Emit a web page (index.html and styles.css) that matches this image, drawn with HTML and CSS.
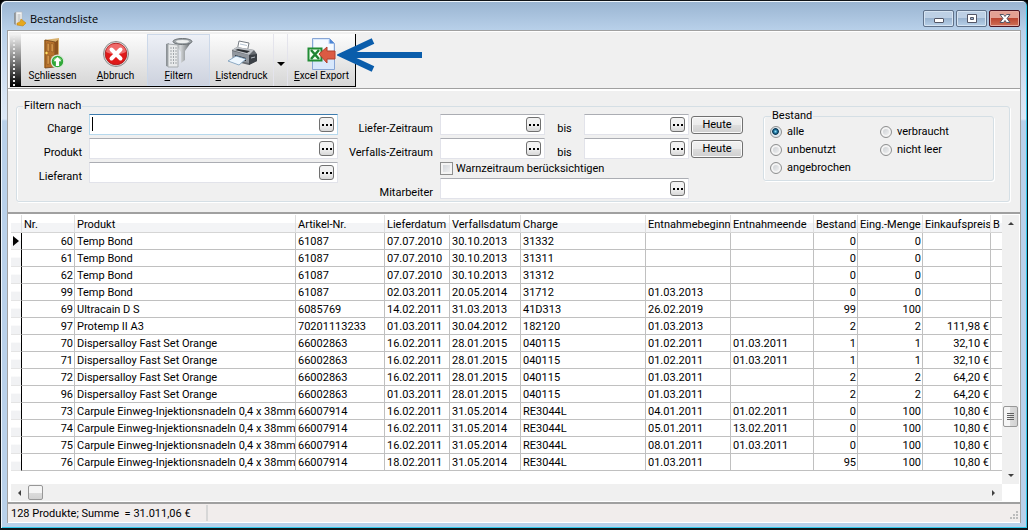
FILE: index.html
```
<!DOCTYPE html>
<html lang="de">
<head>
  <meta charset="UTF-8" />
  <meta name="viewport" content="width=device-width, initial-scale=1.0"/>
  <title>Bestandsliste</title>
  <link rel="stylesheet" href="styles.css">
</head>
<body>

  <div class="window">
    <header class="titlebar">
      <svg class="app-icon" width="13" height="16" viewBox="0 0 13 16">
        <path d="M1 2l2-1v13l-2-1z" fill="#8f9599"/>
        <path d="M3 1h6v13H3z" fill="#f3f4f4" stroke="#b5babd" stroke-width=".6"/>
        <path d="M4.500 4h3M4.500 6h3M4.500 8h3M4.500 10h3" stroke="#a9aeb1"/>
        <path d="M4 12l3-1 1-3 5 4-3 3-6-1z" fill="#e5a81e" stroke="#bd7b0b" stroke-width=".5"/>
      </svg>
      <h1>Bestandsliste</h1>
      <div class="window-buttons">
        <button class="win-btn" aria-label="Minimieren">
          <svg width="12" height="12" viewBox="0 0 12 12"><rect x="1.500" y="5.500" width="9" height="4" rx=".5" fill="#fff" stroke="#535666"/></svg>
        </button>
        <button class="win-btn" aria-label="Maximieren">
          <svg width="12" height="12" viewBox="0 0 12 12"><path d="M1.500 1.500h9v8h-9zM4.500 4.500v2h3v-2z" fill="#fff" fill-rule="evenodd" stroke="#535666"/></svg>
        </button>
        <button class="win-btn close" aria-label="Schließen">
          <svg width="12" height="12" viewBox="0 0 12 12"><path d="M1 1.500h3.500L6 3.500l1.500-2H11L8 5.500l3 4H7.500L6 7.500l-1.500 2H1l3-4z" fill="#fff" stroke="#535666"/></svg>
        </button>
      </div>
    </header>

    <div class="content">
      <div class="toolbar-area">
        <div class="toolbar">
          <div class="grip"></div>
          <button class="tool">
            <svg width="32" height="32" viewBox="0 0 32 32">
              <path d="M7 2l15-2v27L7 30z" fill="#d8b06e"/>
              <path d="M8 2l10 2v25L8 30z" fill="#b8722c" stroke="#6f431b" stroke-width=".8"/>
              <path d="M18 4l3-2v23l-3 4z" fill="#8c531e"/>
              <path d="M10 5l2.500.5v8L10 13zM14 5.500l2.500.5v8L14 13.500zM10 17l2.500.5V26l-2.500.5zM14 17.500l2.500.5v7l-2.500.5z" fill="#d29449" stroke="#83511f" stroke-width=".5"/>
              <circle cx="9.500" cy="15" r="1.200" fill="#ffe168"/>
              <circle cx="20.500" cy="23.500" r="6.300" fill="#30a838" stroke="#dce7dc" stroke-width="1.200"/>
              <path d="M16 22a5 5 0 019 0z" fill="#83d47f"/>
              <path d="M20.500 19l4 4.300h-2.400V28h-3.200v-4.700h-2.400z" fill="#fff"/>
            </svg>
            <span>S<u>c</u>hliessen</span>
          </button>
          <button class="tool">
            <svg width="32" height="32" viewBox="0 0 32 32">
              <circle cx="16" cy="16" r="12.500" fill="#ddd" stroke="#8c8c8c"/>
              <circle cx="16" cy="16" r="10.800" fill="#e01919" stroke="#a51717" stroke-width=".8"/>
              <path d="M6 14C7 3 25 3 26 14c-6 3-14 3-20 0z" fill="#ef6a6a"/>
              <path d="M11.500 11.500l9 9m0-9l-9 9" stroke="#fff" stroke-width="4" stroke-linecap="round"/>
            </svg>
            <span><u>A</u>bbruch</span>
          </button>
          <button class="tool active">
            <svg width="32" height="32" viewBox="0 0 32 32">
              <defs><linearGradient id="steel"><stop offset="0" stop-color="#9aa0a4"/><stop offset=".4" stop-color="#d4d7d9"/><stop offset="1" stop-color="#4f5559"/></linearGradient></defs>
              <path d="M10 3l8 11v11l4-3V13l7-10z" fill="url(#steel)"/>
              <ellipse cx="19.500" cy="3.500" rx="9.500" ry="3" fill="#a2a8ac" stroke="#6b7175"/>
              <ellipse cx="19.500" cy="3.500" rx="6.500" ry="1.600" fill="#edefef"/>
              <path d="M3 6l3-1v24l-3-1z" fill="#8c9296"/>
              <path d="M5 6l10 1v22L5 29z" fill="#e8eaeb" stroke="#a6abae"/>
              <path d="M8 9v17M10.500 9v18M13 9v17" stroke="#a1a6aa" stroke-dasharray="2 1"/>
            </svg>
            <span><u>F</u>iltern</span>
          </button>
          <button class="tool">
            <svg width="32" height="32" viewBox="0 0 32 32">
              <path d="M13 3l10 2-2 10-10-2z" fill="#fff" stroke="#777d84"/>
              <path d="M14 6l7 1.500" stroke="#b6c5d4"/>
              <path d="M6 12l5-3 17 3 3 4v7l-8 4-16-4z" fill="#666b71"/>
              <path d="M6 12l5-3 17 3-5 5z" fill="#bec2c7"/>
              <path d="M9 12l3-1 12 2-3 2z" fill="#2c3034"/>
              <path d="M23 17l8-1v7l-8 4z" fill="#3b4046"/>
              <path d="M6 13l17 4v8L7 22z" fill="#91979e"/>
              <path d="M9 17l11 3v3L9 20z" fill="#23272b"/>
              <path d="M10 18l10 3-7 6L2 23z" fill="#edf7ff" stroke="#7598b8" stroke-width=".8"/>
              <path d="M25 20l4-1" stroke="#b7bec5"/>
            </svg>
            <span><u>L</u>istendruck</span>
          </button>
          <button class="tool-arrow" aria-label="Weitere Optionen"></button>
          <button class="tool wide">
            <svg width="32" height="32" viewBox="0 0 32 32">
              <path d="M6.500.5h17l5 5v26h-22z" fill="#d8e8fc" stroke="#87a5d5"/>
              <path d="M8 2h14v4h5v13C20 23 13 12 8 18z" fill="#f6faff"/>
              <path d="M23.500.5v5h5z" fill="#4d86d6"/>
              <path d="M2.500 10.500h13v12h-13z" fill="#f5fff4" stroke="#218c35" stroke-width="2"/>
              <path d="M5 12l8 9m0-9l-8 9" stroke="#208434" stroke-width="2.500"/>
              <path d="M13 16l8-7v4h8v8h-8v4z" fill="#dc5b43" stroke="#b2402d"/>
            </svg>
            <span><u>E</u>xcel Export</span>
          </button>
          <svg class="pointer" width="86" height="36" viewBox="0 0 86 36">
            <path d="M36 4L6 18l30 14M8 18h77" fill="none" stroke="#0a5dab" stroke-width="6"/>
          </svg>
        </div>
      </div>

      <form class="filter-area">
        <fieldset class="filter">
          <legend>Filtern nach</legend>

          <div class="fields">
            <label for="charge">Charge</label>
            <div class="picker focused"><i class="caret"></i><input type="text" id="charge" /><button type="button" aria-label="Charge wählen"></button></div>
            <label for="produkt">Produkt</label>
            <div class="picker"><input type="text" id="produkt" /><button type="button" aria-label="Produkt wählen"></button></div>
            <label for="lieferant">Lieferant</label>
            <div class="picker"><input type="text" id="lieferant" /><button type="button" aria-label="Lieferant wählen"></button></div>
          </div>

          <div class="fields periods">
            <label for="lieferVon">Liefer-Zeitraum</label>
            <div class="picker"><input type="text" id="lieferVon" /><button type="button" aria-label="Datum wählen"></button></div>
            <label class="until" for="lieferBis">bis</label>
            <div class="picker"><input type="text" id="lieferBis" /><button type="button" aria-label="Datum wählen"></button></div>
            <button type="button" class="today">Heute</button>

            <label for="verfallVon">Verfalls-Zeitraum</label>
            <div class="picker"><input type="text" id="verfallVon" /><button type="button" aria-label="Datum wählen"></button></div>
            <label class="until" for="verfallBis">bis</label>
            <div class="picker"><input type="text" id="verfallBis" /><button type="button" aria-label="Datum wählen"></button></div>
            <button type="button" class="today">Heute</button>

            <label class="check"><input type="checkbox" />Warnzeitraum berücksichtigen</label>

            <label for="mitarbeiter">Mitarbeiter</label>
            <div class="picker span"><input type="text" id="mitarbeiter" /><button type="button" aria-label="Mitarbeiter wählen"></button></div>
          </div>

          <fieldset class="stock">
            <legend>Bestand</legend>
            <label><input type="radio" name="bestand" checked />alle</label>
            <label><input type="radio" name="bestand" />verbraucht</label>
            <label><input type="radio" name="bestand" />unbenutzt</label>
            <label><input type="radio" name="bestand" />nicht leer</label>
            <label><input type="radio" name="bestand" />angebrochen</label>
          </fieldset>
        </fieldset>
      </form>

      <div class="grid-area">
        <div class="grid-main">
          <div class="grid-view">
            <table>
              <colgroup>
                <col class="c-mark"><col class="c-nr"><col class="c-product"><col class="c-article"><col class="c-delivery"><col class="c-expiry">
                <col class="c-batch"><col class="c-start"><col class="c-end"><col class="c-stock"><col class="c-amount"><col class="c-price"><col>
              </colgroup>
              <thead>
                <tr>
                  <th></th>
                  <th>Nr.</th>
                  <th>Produkt</th>
                  <th>Artikel-Nr.</th>
                  <th>Lieferdatum</th>
                  <th>Verfallsdatum</th>
                  <th>Charge</th>
                  <th>Entnahmebeginn</th>
                  <th>Entnahmeende</th>
                  <th>Bestand</th>
                  <th>Eing.-Menge</th>
                  <th>Einkaufspreis</th>
                  <th>B</th>
                </tr>
              </thead>
              <tbody id="stockBody">
                <!-- Dynamic Rows -->
              </tbody>
            </table>
          </div>
          <div class="scroll vertical">
            <button class="arrow up" aria-label="Nach oben"></button>
            <div class="space before"></div>
            <div class="thumb"></div>
            <div class="space after"></div>
            <button class="arrow down" aria-label="Nach unten"></button>
          </div>
        </div>
        <div class="scroll horizontal">
          <button class="arrow left" aria-label="Nach links"></button>
          <div class="thumb"></div>
          <div class="space"></div>
          <button class="arrow right" aria-label="Nach rechts"></button>
        </div>
      </div>

      <footer class="statusbar">
        <div class="summary">128 Produkte; Summe&nbsp; = 31.011,06 €</div>
        <svg class="resize" width="10" height="10" viewBox="0 0 10 10">
          <path d="M7 0h2v2H7zM4 3h2v2H4zM7 3h2v2H7zM1 6h2v2H1zM4 6h2v2H4zM7 6h2v2H7z" fill="#bcbcbc"/>
        </svg>
      </footer>
    </div>
  </div>

  <script>
    const carpule = "Carpule Einweg-Injektionsnadeln 0,4 x 38mm";
    const rows = [
      ["60", "Temp Bond", "61087", "07.07.2010", "30.10.2013", "31332", "", "", "0", "0", ""],
      ["61", "Temp Bond", "61087", "07.07.2010", "30.10.2013", "31311", "", "", "0", "0", ""],
      ["62", "Temp Bond", "61087", "07.07.2010", "30.10.2013", "31312", "", "", "0", "0", ""],
      ["99", "Temp Bond", "61087", "02.03.2011", "20.05.2014", "31712", "01.03.2013", "", "0", "0", ""],
      ["69", "Ultracain D S", "6085769", "14.02.2011", "31.03.2013", "41D313", "26.02.2019", "", "99", "100", ""],
      ["97", "Protemp II A3", "70201113233", "01.03.2011", "30.04.2012", "182120", "01.03.2013", "", "2", "2", "111,98 €"],
      ["70", "Dispersalloy Fast Set Orange", "66002863", "16.02.2011", "28.01.2015", "040115", "01.02.2011", "01.03.2011", "1", "1", "32,10 €"],
      ["71", "Dispersalloy Fast Set Orange", "66002863", "16.02.2011", "28.01.2015", "040115", "01.02.2011", "01.03.2011", "1", "1", "32,10 €"],
      ["72", "Dispersalloy Fast Set Orange", "66002863", "16.02.2011", "28.01.2015", "040115", "01.03.2011", "", "2", "2", "64,20 €"],
      ["96", "Dispersalloy Fast Set Orange", "66002863", "01.03.2011", "28.01.2015", "040115", "01.03.2011", "", "2", "2", "64,20 €"],
      ["73", carpule, "66007914", "16.02.2011", "31.05.2014", "RE3044L", "04.01.2011", "01.02.2011", "0", "100", "10,80 €"],
      ["74", carpule, "66007914", "16.02.2011", "31.05.2014", "RE3044L", "05.01.2011", "13.02.2011", "0", "100", "10,80 €"],
      ["75", carpule, "66007914", "16.02.2011", "31.05.2014", "RE3044L", "08.01.2011", "01.03.2011", "0", "100", "10,80 €"],
      ["76", carpule, "66007914", "18.02.2011", "31.05.2014", "RE3044L", "01.03.2011", "", "95", "100", "10,80 €"]
    ];
    const numeric = [0, 8, 9, 10];

    rows.forEach(cells => {
      const row = document.createElement("tr");
      row.innerHTML = "<td></td>" +
        cells.map((text, i) => `<td${numeric.includes(i) ? ' class="num"' : ""}>${text}</td>`).join("") +
        "<td></td>";
      document.getElementById("stockBody").appendChild(row);
    });
  </script>

</body>
</html>
```

FILE: styles.css
```
* {
  box-sizing: border-box;
}

body {
  margin: 0;
  background: #000;
  color: #000;
  font-family: Roboto, "Liberation Sans", Arial, sans-serif;
  font-size: 11px;
  line-height: 14px;
}

button, input {
  font: inherit;
  color: inherit;
  margin: 0;
  padding: 0;
}

.window {
  display: flex;
  flex-direction: column;
  min-height: 100vh;
  padding: 0 6px 5px;
  border: 1px solid #101418;
  border-bottom-width: 2px;
  border-radius: 6px 6px 0 0;
  background: linear-gradient(#99b4d1, #b9d1ea 30px, #d5e3f3 90px, #dce8f6 118px, #b9d1ea 120px);
  box-shadow: inset 1px 1px #eef5fb, inset -1px -1px #2fc8ea;
}

/* Title bar */
.titlebar {
  display: flex;
  align-items: center;
  height: 29px;
  padding: 6px 1px 0 6px;
}

.titlebar h1 {
  flex: 1;
  margin: 0 0 0 4px;
  font-family: "Open Sans", "Segoe UI", sans-serif;
  font-size: 11px;
  font-weight: normal;
}

.window-buttons {
  display: flex;
  gap: 2px;
}

.win-btn {
  display: flex;
  align-items: center;
  justify-content: center;
  width: 31px;
  height: 17px;
  border: 1px solid #5f7189;
  border-radius: 2px;
  background: linear-gradient(#bdd0e5 45%, #9ab4d0 50%, #b8d0e8);
  box-shadow: inset 0 0 0 1px #d6e4f2;
}

.win-btn.close {
  border-color: #4c1422;
  background: linear-gradient(#e3a093 45%, #bb4632 50%, #cf7057);
  box-shadow: inset 0 0 0 1px #e5aaa0;
}

.content {
  display: flex;
  flex: 1;
  flex-direction: column;
  border-left: 1px solid #a0a0a0;
  border-right: 1px solid #a0a0a0;
  background: #f0f0f0;
}

/* Toolbar */
.toolbar-area {
  padding: 3px 2px 1px;
  border-top: 1px solid #a0a0a0;
  border-bottom: 1px solid #a0a0a0;
  box-shadow: inset 1px 1px #fff;
}

.toolbar {
  display: flex;
  position: relative;
  width: max-content;
  height: 53px;
  border-right: 1px solid #000;
  border-bottom: 1px solid #000;
  background: linear-gradient(#fcfcfc, #d6d6d6);
}

.grip {
  width: 11px;
  background:
    repeating-linear-gradient(transparent 0 2px, #e8e8e8 2px 4px) 3px 0 / 2px 100% no-repeat,
    linear-gradient(#f4f4f4, #808080 50%, #000);
}

.tool {
  display: flex;
  flex-direction: column;
  align-items: center;
  width: 63px;
  padding-top: 4px;
  border: 0;
  background: none;
  font-size: 10px;
  line-height: 12px;
  white-space: nowrap;
}

.tool.active {
  border: 1px solid #ccd8e9;
  padding-top: 3px;
  background: linear-gradient(#edf0f6, #cdd2de);
}

.tool.wide {
  width: 67px;
}

.tool-arrow {
  display: flex;
  align-items: center;
  justify-content: center;
  width: 15px;
  padding-top: 8px;
  border: 0;
  border-left: 1px solid #e4e4ec;
  border-right: 1px solid #e4e4ec;
  background: none;
}

.tool-arrow::before {
  content: "";
  border: 4px solid transparent;
  border-top-color: #000;
  border-bottom: 0;
}

.pointer {
  position: absolute;
  top: 3px;
  left: calc(100% - 18px);
}

/* Filter */
.filter-area {
  padding: 8px 10px 10px 8px;
  border-top: 2px solid #fff;
  border-bottom: 2px solid #a0a0a0;
}

fieldset {
  min-width: 0;
  margin: 0;
  border: 1px solid #d5dfe5;
  border-radius: 3px;
  box-shadow: inset 1px 0 #fff, 1px 1px #fff;
}

.filter {
  display: flex;
  padding: 1px 15px 2px 6px;
}

legend {
  padding: 0 1px;
}

.fields {
  display: grid;
  grid-template-columns: 59px 249px;
  gap: 3px 7px;
  align-content: start;
}

.fields > label {
  padding-top: 8px;
  height: 21px;
  line-height: 13px;
  text-align: right;
  white-space: nowrap;
}

.periods {
  grid-template-columns: 95px 105px 25px 105px 52px;
}

.periods .until {
  text-align: center;
}

.fields > .check {
  display: flex;
  grid-column: 2 / -1;
  align-items: center;
  gap: 3px;
  height: 13px;
  padding: 0;
}

.picker {
  display: flex;
  height: 21px;
  padding: 2px 3px 3px 2px;
  border: 1px solid #e2e3ea;
  border-top-color: #abadb3;
  background: #fff;
}

.picker.focused {
  border-color: #b7d9ed;
  border-top-color: #3d7bad;
}

.picker.span {
  grid-column: 2 / 5;
}

.picker input {
  flex: 1;
  min-width: 0;
  border: 0;
  outline: 0;
  background: none;
}

.caret {
  width: 1px;
  height: 14px;
  background: #000;
}

.picker button {
  width: 15px;
  height: 15px;
  border: 1px solid #707070;
  border-radius: 3px;
  background:
    repeating-linear-gradient(90deg, #000 0 2px, transparent 2px 4px) 2px 6px / 10px 2px no-repeat,
    linear-gradient(#f2f2f2 50%, #d8d8d8);
}

.today {
  height: 18px;
  margin: 2px 5px 0 -5px;
  border: 1px solid #707070;
  border-radius: 3px;
  background: linear-gradient(#f2f2f2, #ebebeb 50%, #dddddd 50%, #cfcfcf);
  box-shadow: inset 0 0 0 1px #fafafa;
}

input[type="checkbox"] {
  appearance: none;
  width: 13px;
  height: 13px;
  border: 1px solid #8e8f8f;
  background: linear-gradient(135deg, #cbcfd5, #f6f6f6);
  box-shadow: inset 0 0 0 2px #f4f4f4;
}

.stock {
  display: grid;
  grid-template-columns: 110px 1fr;
  align-content: start;
  width: 231px;
  height: 72px;
  margin: -5px 0 0 auto;
  padding: 0 6px;
}

.stock legend {
  margin-left: 1px;
}

.stock label {
  display: flex;
  align-items: center;
  gap: 5px;
  height: 18px;
}

input[type="radio"] {
  appearance: none;
  width: 12px;
  height: 12px;
  border: 1px solid #8e8f8f;
  border-radius: 50%;
  background: linear-gradient(135deg, #c4c8cc, #f8f8f8);
  box-shadow: inset 0 0 0 2px #f4f4f4;
}

input[type="radio"]:checked {
  background: radial-gradient(circle at 45% 45%, #8fe0fb, #14668f 25%, #0b3550 38%, #dfe8ee 48%);
  box-shadow: none;
}

/* Grid */
.grid-area {
  display: flex;
  flex: 1;
  flex-direction: column;
  padding: 1px 1px 1px 3px;
  border-bottom: 2px solid #a0a0a0;
  background: #fff;
}

.grid-main {
  display: flex;
  flex: 1;
}

.grid-view {
  flex: 1;
  min-width: 0;
  overflow: hidden;
}

table {
  width: 100%;
  border-spacing: 0;
  table-layout: fixed;
}

.c-mark { width: 11px; }
.c-nr { width: 53px; }
.c-product { width: 221px; }
.c-article { width: 89px; }
.c-delivery { width: 65px; }
.c-expiry { width: 71px; }
.c-batch { width: 125px; }
.c-start { width: 85px; }
.c-end { width: 83px; }
.c-stock { width: 44px; }
.c-amount { width: 65px; }
.c-price { width: 68px; }

th, td {
  height: 17px;
  padding: 2px 1px 0 2px;
  overflow: hidden;
  border-right: 1px solid #c0c0c0;
  border-bottom: 1px solid #c0c0c0;
  line-height: 14px;
  text-align: left;
  white-space: nowrap;
}

th {
  height: 18px;
  padding-right: 0;
  border-color: #dfdfdf;
  border-bottom-color: #d5d5d5;
  background: linear-gradient(#fff 45%, #f3f4f6 50%);
  font-weight: normal;
}

td.num {
  text-align: right;
}

td:first-child {
  padding: 0;
  border-right-color: #000;
  border-bottom-color: #e4e4e4;
  background: linear-gradient(#fff 45%, #f1f2f4 50%);
}

tbody tr:first-child td:first-child::before {
  content: "";
  display: block;
  width: 0;
  margin-left: 2px;
  border: 5px solid transparent;
  border-left: 6px solid #000;
  border-right: 0;
}

th:last-child, td:last-child {
  border-right: 0;
}

/* Scrollbars */
.scroll {
  display: flex;
  background: #f0f0f0;
}

.vertical {
  flex-direction: column;
  align-items: center;
  width: 17px;
}

.horizontal {
  align-items: center;
  height: 17px;
  margin-right: 17px;
}

.thumb {
  width: 15px;
  height: 15px;
  border: 1px solid #979797;
  border-radius: 2px;
  background: linear-gradient(#f5f5f5 50%, #dcdcdc 50%, #d2d2d2);
}

.vertical .thumb {
  height: 21px;
  background:
    repeating-linear-gradient(#606060 0 1px, transparent 1px 2px) 3px 6px / 7px 7px no-repeat,
    linear-gradient(90deg, #f5f5f5 50%, #dcdcdc 50%, #d2d2d2);
}

.space {
  flex: 1;
}

.space.before {
  flex-grow: 175;
}

.space.after {
  flex-grow: 40;
}

.arrow {
  display: flex;
  align-items: center;
  justify-content: center;
  width: 17px;
  height: 17px;
  border: 0;
  background: none;
}

.arrow::before {
  content: "";
  border: 3px solid transparent;
}

.up::before {
  border-top: 0;
  border-bottom-color: #404040;
}

.down::before {
  border-bottom: 0;
  border-top-color: #404040;
}

.left::before {
  border-left: 0;
  border-right-color: #404040;
}

.right::before {
  border-right: 0;
  border-left-color: #404040;
}

/* Status bar */
.statusbar {
  display: flex;
  align-items: center;
  justify-content: space-between;
  height: 19px;
  padding: 1px 1px 1px 3px;
  border-bottom: 1px solid #fff;
  background: #f1edec;
}

.summary {
  width: 197px;
  height: 16px;
  border-right: 2px solid #d7d7d7;
  line-height: 17px;
  white-space: nowrap;
}

.resize {
  align-self: flex-end;
}
```
